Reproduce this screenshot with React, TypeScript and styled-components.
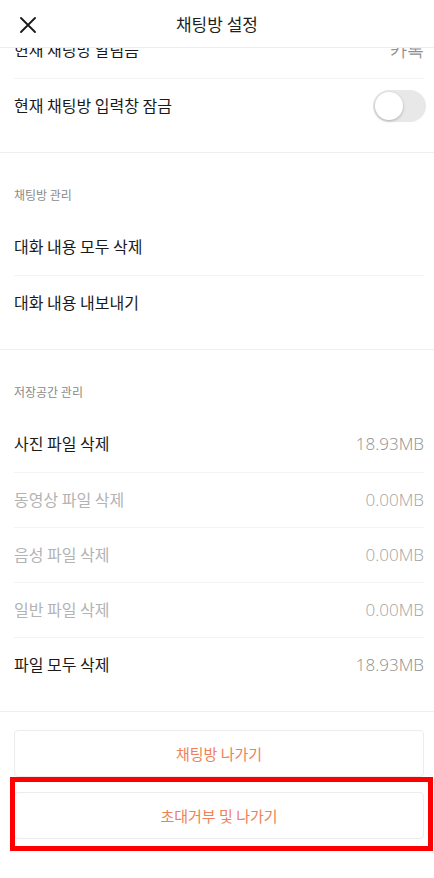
import React from "react";
import styled, { createGlobalStyle } from "styled-components";

const GlobalStyle = createGlobalStyle`
  html, body { margin: 0; padding: 0; background: #ffffff; }
  * { box-sizing: border-box; }
  body {
    font-family: "Noto Sans CJK KR", "Noto Sans", sans-serif;
    -webkit-font-smoothing: antialiased;
  }
`;

const Page = styled.div`
  position: relative;
  width: 434px;
  height: 878px;
  overflow: hidden;
  background: #fff;
`;

const Header = styled.header`
  position: absolute;
  top: 0;
  left: 0;
  right: 0;
  height: 48px;
  background: #fff;
  border-bottom: 1px solid #ededed;
  display: flex;
  align-items: center;
  justify-content: center;
  z-index: 2;
`;

const CloseButton = styled.button`
  position: absolute;
  left: 14px;
  top: 11px;
  width: 28px;
  height: 28px;
  border: 0;
  padding: 0;
  background: transparent;
  display: flex;
  align-items: center;
  justify-content: center;
`;

const Title = styled.h1`
  margin: 0;
  font-size: 17px;
  font-weight: 400;
  color: #1f1f1f;
  line-height: 22px;
`;

const Content = styled.main`
  padding-top: 23px;
  display: flex;
  flex-direction: column;
`;

const Section = styled.section`
  padding-bottom: 19px;
  border-bottom: 1px solid #efefef;
  display: flex;
  flex-direction: column;
`;

const SectionTitle = styled.div`
  padding: 35px 14px 18px;
  font-size: 12px;
  line-height: 14px;
  color: #8a8a8a;
`;

const Row = styled.div`
  margin: 0 10px 0 14px;
  height: 55px;
  display: flex;
  align-items: center;
  justify-content: space-between;
  & + & {
    border-top: 1px solid #f3f3f3;
  }
`;

const Label = styled.span<{ $muted?: boolean }>`
  font-size: 16px;
  color: ${(p) => (p.$muted ? "#b3b3b3" : "#1a1a1a")};
  line-height: 20px;
  margin-bottom: 3px;
`;

const Value = styled.span<{ $muted?: boolean }>`
  font-family: "Open Sans", "Noto Sans", sans-serif;
  font-weight: 300;
  font-size: 17px;
  color: ${(p) => (p.$muted ? "#a3a3a3" : "#8e8e8e")};
  line-height: 20px;
  margin-bottom: 1px;
`;

const Toggle = styled.div`
  width: 53px;
  height: 32px;
  margin-right: -2px;
  border-radius: 16px;
  background: #e8e8e8;
  padding: 2px;
  display: flex;
  align-items: center;
`;

const Knob = styled.div`
  width: 28px;
  height: 28px;
  border-radius: 50%;
  background: #fff;
  box-shadow: 0 1px 3px rgba(0, 0, 0, 0.25);
`;

const ButtonSection = styled.section`
  padding: 18px 10px 18px 14px;
  display: flex;
  flex-direction: column;
  gap: 15px;
`;

const ActionButton = styled.button`
  height: 47px;
  width: 100%;
  border: 1px solid #ececec;
  border-radius: 4px;
  background: #fff;
  font-family: "Noto Sans CJK KR", "Noto Sans", sans-serif;
  font-size: 15px;
  color: #ef8159;
  display: flex;
  align-items: center;
  justify-content: center;
  padding-bottom: 2px;
`;

const Highlight = styled.div`
  position: absolute;
  left: 10px;
  top: 777px;
  width: 423px;
  height: 74px;
  border: 5px solid #ff0000;
  pointer-events: none;
  z-index: 3;
`;

const storage = [
  { label: "사진 파일 삭제", value: "18.93MB", muted: false },
  { label: "동영상 파일 삭제", value: "0.00MB", muted: true },
  { label: "음성 파일 삭제", value: "0.00MB", muted: true },
  { label: "일반 파일 삭제", value: "0.00MB", muted: true },
  { label: "파일 모두 삭제", value: "18.93MB", muted: false },
];

export default function App() {
  return (
    <Page>
      <GlobalStyle />
      <Header>
        <CloseButton aria-label="닫기">
          <svg width="16" height="16" viewBox="0 0 16 16">
            <path d="M1 1 L15 15 M15 1 L1 15" stroke="#1a1a1a" strokeWidth="1.8" strokeLinecap="round" />
          </svg>
        </CloseButton>
        <Title>채팅방 설정</Title>
      </Header>
      <Content>
        <Section>
          <Row>
            <Label>현재 채팅방 알림음</Label>
            <Value>카톡</Value>
          </Row>
          <Row>
            <Label>현재 채팅방 입력창 잠금</Label>
            <Toggle>
              <Knob />
            </Toggle>
          </Row>
        </Section>
        <Section>
          <SectionTitle>채팅방 관리</SectionTitle>
          <Row>
            <Label>대화 내용 모두 삭제</Label>
          </Row>
          <Row>
            <Label>대화 내용 내보내기</Label>
          </Row>
        </Section>
        <Section>
          <SectionTitle>저장공간 관리</SectionTitle>
          {storage.map((s) => (
            <Row key={s.label}>
              <Label $muted={s.muted}>{s.label}</Label>
              <Value $muted={s.muted}>{s.value}</Value>
            </Row>
          ))}
        </Section>
        <ButtonSection>
          <ActionButton>채팅방 나가기</ActionButton>
          <ActionButton>초대거부 및 나가기</ActionButton>
        </ButtonSection>
      </Content>
      <Highlight />
    </Page>
  );
}
